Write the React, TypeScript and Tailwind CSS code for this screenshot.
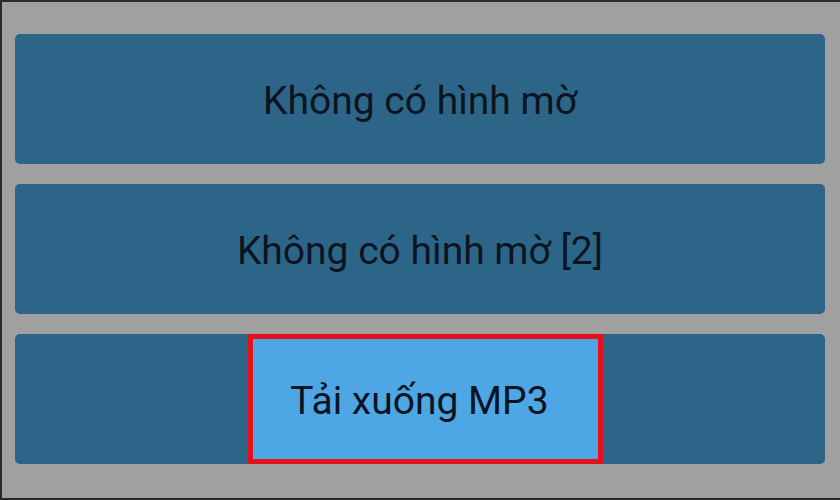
import React from "react";

export default function App() {
  const font = { fontFamily: "Roboto, 'Noto Sans', sans-serif" };
  return (
    <div
      className="w-[840px] h-[500px] bg-[#a0a0a0] border-t-2 border-l-2 border-b-2 border-[#2a2a2a] flex flex-col gap-[20px] pt-[32px] pl-[13px] pr-[15px] overflow-hidden"
      style={font}
    >
      <div className="h-[130px] rounded-[5px] bg-[#2d6589] flex items-center justify-center pt-[4px] text-[39px] text-[#0c1420]">
        Không có hình mờ
      </div>
      <div className="h-[130px] rounded-[5px] bg-[#2d6589] flex items-center justify-center pt-[4px] text-[39px] text-[#0c1420]">
        Không có hình mờ [2]
      </div>
      <div className="h-[130px] rounded-[5px] bg-[#2d6589] flex items-stretch pl-[233px]">
        <div className="w-[355px] border-[5px] border-[#e2111b] bg-[#4fa6e5] flex items-center justify-center pr-[12px] pt-[4px] text-[39px] text-[#0c1420]">
          Tải xuống MP3
        </div>
      </div>
    </div>
  );
}
